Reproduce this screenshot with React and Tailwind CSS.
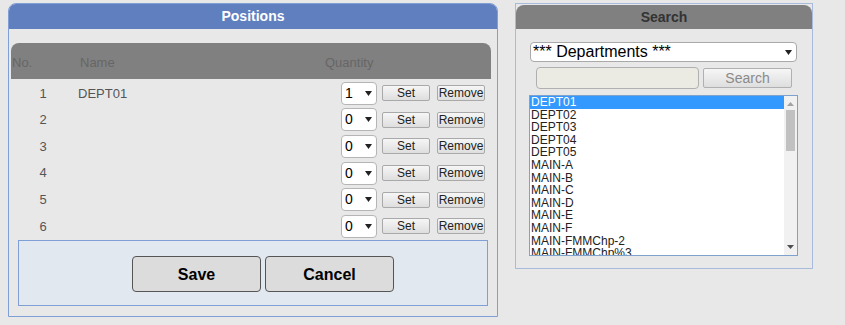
const rows = [
  { no: 1, name: "DEPT01", qty: "1" },
  { no: 2, name: "", qty: "0" },
  { no: 3, name: "", qty: "0" },
  { no: 4, name: "", qty: "0" },
  { no: 5, name: "", qty: "0" },
  { no: 6, name: "", qty: "0" },
];

const items = [
  "DEPT01", "DEPT02", "DEPT03", "DEPT04", "DEPT05",
  "MAIN-A", "MAIN-B", "MAIN-C", "MAIN-D", "MAIN-E", "MAIN-F",
  "MAIN-FMMChp-2", "MAIN-FMMChp%3",
];

function Arrow({ className = "" }) {
  return (
    <svg width="7" height="5" viewBox="0 0 7 5" className={className}>
      <path d="M0 0 L7 0 L3.5 5 Z" fill="#222" />
    </svg>
  );
}

function SmallButton({ children, w = "w-[48px]" }) {
  return (
    <div className={`${w} h-[16px] flex items-center justify-center border border-[#a9a9a9] rounded-[2px] bg-linear-to-b from-[#f6f6f6] to-[#dedede] text-[12px] text-[#222] leading-none`}>
      {children}
    </div>
  );
}

function Positions() {
  return (
    <div className="w-[490px] h-[314px] border border-[#7f9fd6] rounded-t-[8px] flex flex-col">
      <div className="h-[25px] bg-[#5f7fbf] rounded-t-[7px] flex items-center justify-center text-white font-bold text-[14px]">
        Positions
      </div>
      <div className="ml-[2px] mr-[6px] mt-[14px]">
        <div className="h-[36px] bg-[#808080] rounded-t-[8px] relative text-[13px] text-[#666]">
          <span className="absolute left-[1px] top-[10px]">No.</span>
          <span className="absolute left-[69px] top-[10px]">Name</span>
          <span className="absolute left-[314px] top-[10px]">Quantity</span>
        </div>
        <div className="pt-[1px]">
          {rows.map((r) => (
            <div key={r.no} className="h-[26.6px] flex items-center text-[13px] text-[#555]">
              <div className="w-[64px] text-center">{r.no}</div>
              <div className="ml-[3px] w-[263px]">{r.name}</div>
              <div className="w-[36px] h-[23px] bg-white border border-[#b5b5b5] rounded-[4px] flex items-center justify-between pl-[3px] pr-[4px] text-[14px] text-black">
                <span>{r.qty}</span>
                <Arrow />
              </div>
              <div className="ml-[5px]">
                <SmallButton>Set</SmallButton>
              </div>
              <div className="ml-[7px]">
                <SmallButton>Remove</SmallButton>
              </div>
            </div>
          ))}
        </div>
      </div>
      <div className="ml-[9px] w-[470px] h-[66px] bg-[#e1e8ef] border border-[#7f9fd6] flex justify-center gap-[4px] pt-[15px] pl-[20px]">
        <div className="w-[129px] h-[36px] bg-[#dcdcdc] border border-[#555] rounded-[4px] flex items-center justify-center pt-[2px] font-bold text-[16px] text-black">
          Save
        </div>
        <div className="w-[129px] h-[36px] bg-[#dcdcdc] border border-[#555] rounded-[4px] flex items-center justify-center pt-[2px] font-bold text-[16px] text-black">
          Cancel
        </div>
      </div>
    </div>
  );
}

function Search() {
  return (
    <div className="w-[298px] h-[266px] border border-[#a8bbdd] pt-[1px] flex flex-col">
      <div className="h-[24px] bg-[#808080] rounded-t-[8px] flex items-center justify-center font-bold text-[14px] text-[#333]">
        Search
      </div>
      <div className="ml-[14px] mt-[13px] w-[267px] h-[20px] bg-white border border-[#a9a9a9] rounded-[4px] flex items-center justify-between pl-[2px] pr-[4px] text-[16px] text-black">
        <span className="leading-none">*** Departments ***</span>
        <Arrow />
      </div>
      <div className="ml-[20px] mt-[5px] flex items-center">
        <div className="w-[163px] h-[22px] bg-[#ebebe4] border border-[#b0b0b0] rounded-[4px]" />
        <div className="ml-[4px] w-[89px] h-[20px] border border-[#b0b0b0] rounded-[2px] bg-linear-to-b from-[#f6f6f6] to-[#dedede] flex items-center justify-center text-[14px] text-[#8a8a8a]">
          Search
        </div>
      </div>
      <div className="ml-[13px] mt-[6px] w-[269px] h-[161px] border border-[#7da2ce] bg-white flex overflow-hidden">
        <div className="flex-1 text-[12px] leading-[12.6px] text-[#222]">
          {items.map((it, i) => (
            <div key={it} className={i === 0 ? "bg-[#3399ff] text-white pl-[1px]" : "pl-[1px]"}>
              {it}
            </div>
          ))}
        </div>
        <div className="w-[13px] bg-[#f1f1f1] flex flex-col items-center">
          <svg width="7" height="4" viewBox="0 0 7 4" className="mt-[6px]">
            <path d="M0 4 L7 4 L3.5 0 Z" fill="#a3a3a3" />
          </svg>
          <div className="mt-[4px] w-[9px] h-[41px] bg-[#c1c1c1]" />
          <div className="flex-1" />
          <svg width="7" height="4" viewBox="0 0 7 4" className="mb-[6px]">
            <path d="M0 0 L7 0 L3.5 4 Z" fill="#505050" />
          </svg>
        </div>
      </div>
    </div>
  );
}

export default function App() {
  return (
    <div
      className="w-[845px] h-[325px] bg-[#e8e8e8] flex items-start pl-[8px] pt-[3px]"
      style={{ fontFamily: '"Liberation Sans", Arial, sans-serif' }}
    >
      <Positions />
      <div className="ml-[17px]">
        <Search />
      </div>
    </div>
  );
}
